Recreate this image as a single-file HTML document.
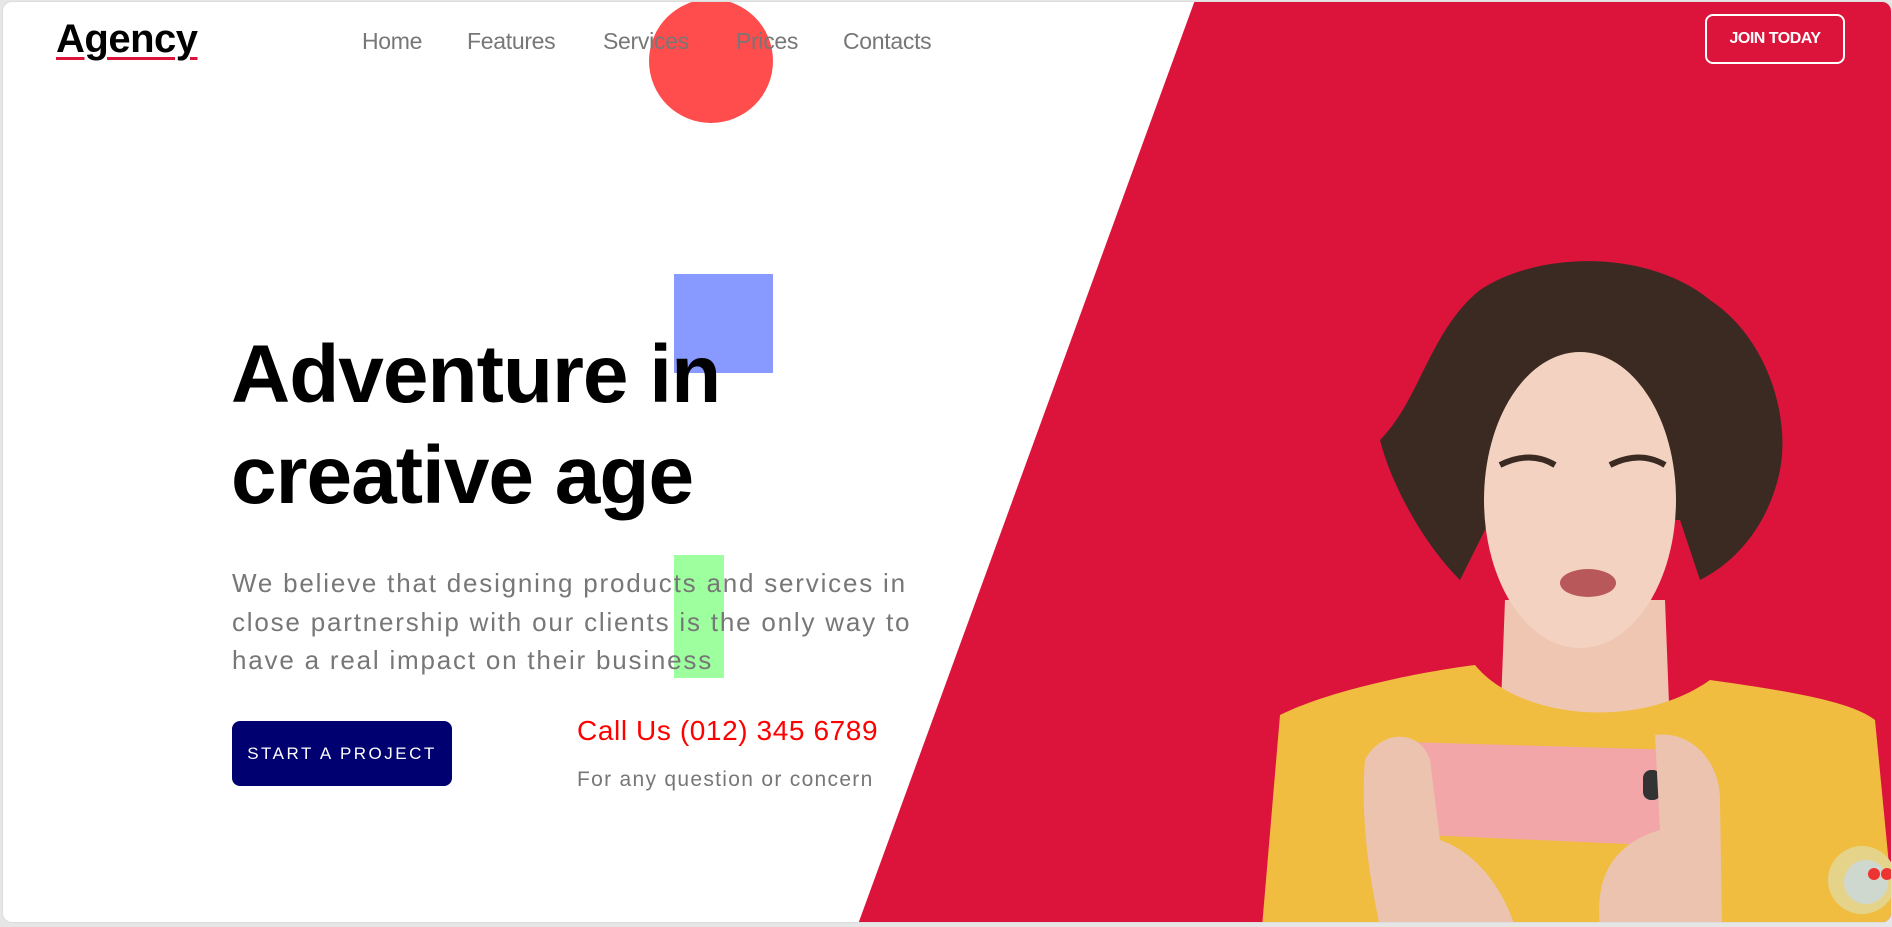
<!DOCTYPE html>
<html><head><meta charset="utf-8"><style>
html,body{margin:0;padding:0;width:1892px;height:927px;overflow:hidden;background:#e6e6e6;font-family:"Liberation Sans",sans-serif}
.card{position:absolute;left:2px;top:1px;width:1890px;height:922px;background:#fff;border-radius:10px;overflow:hidden;border:1px solid #ddd;box-sizing:border-box}
.abs{position:absolute;white-space:nowrap}
.nav{top:26px;font-size:23px;color:#777;letter-spacing:-0.3px}
</style></head><body>
<div class="card">
<svg class="abs" style="left:-3px;top:-2px" width="1895" height="927" viewBox="0 0 1895 927">
  <polygon points="1195,0 1895,0 1895,927 857,927" fill="#dc143c"/>
  <circle cx="711" cy="61" r="62" fill="#ff4c4c"/>
  <rect x="674" y="274" width="99" height="99" fill="#8899ff"/>
  <rect x="674" y="555" width="50" height="123" fill="#9dff9d"/>
  <!-- hair back -->
  <path d="M1380,440 C1420,400 1430,330 1480,290 C1540,250 1650,250 1710,300 C1770,340 1790,420 1780,470 C1770,520 1740,560 1700,580 L1680,520 L1490,520 L1460,580 C1420,540 1390,480 1380,440 Z" fill="#3b2a22"/>
  <!-- neck -->
  <path d="M1505,600 L1665,600 L1670,730 L1500,730 Z" fill="#efc6b2"/>
  <!-- face -->
  <ellipse cx="1580" cy="500" rx="96" ry="148" fill="#f3d2c1"/>
  <!-- hair fringe -->
  <path d="M1475,420 C1480,340 1540,300 1610,310 C1680,320 1700,370 1690,430 C1660,370 1620,350 1560,345 C1520,350 1495,380 1475,420 Z" fill="#3b2a22"/>
  <path d="M1500,465 q30,-15 55,0 M1610,465 q30,-15 55,0" stroke="#3a2a22" stroke-width="6" fill="none"/>
  <ellipse cx="1588" cy="583" rx="28" ry="14" fill="#b9585a"/>
  <!-- shirt -->
  <path d="M1280,715 C1330,690 1420,672 1475,665 C1520,720 1640,730 1710,680 C1780,690 1850,700 1875,720 L1895,927 L1262,927 Z" fill="#f0bd40"/>
  <!-- phone -->
  <path d="M1408,742 L1678,750 L1672,846 L1402,834 Z" fill="#f3a6a8"/>
  <rect x="1643" y="770" width="18" height="30" rx="8" fill="#333"/>
  <!-- hands -->
  <path d="M1365,760 C1380,730 1420,728 1430,760 L1440,840 C1470,850 1500,880 1515,927 L1380,927 C1370,880 1360,820 1365,760 Z" fill="#ecc3ae"/>
  <path d="M1655,735 C1690,730 1720,760 1720,800 L1722,927 L1600,927 C1595,880 1610,845 1660,830 Z" fill="#ecc3ae"/>
  <circle cx="1862" cy="880" r="34" fill="#e6d38a"/>
  <circle cx="1866" cy="882" r="22" fill="#cfd8cf"/>
  <circle cx="1874" cy="874" r="6" fill="#e33"/><circle cx="1887" cy="874" r="6" fill="#e33"/>
</svg>
<div class="abs" style="left:53px;top:15px;font-size:40px;font-weight:bold;color:#000;letter-spacing:-0.5px;text-decoration:underline;text-decoration-color:#dc143c;text-decoration-thickness:3px;text-underline-offset:5px">Agency</div>
<div class="abs nav" style="left:359px">Home</div>
<div class="abs nav" style="left:464px">Features</div>
<div class="abs nav" style="left:600px">Services</div>
<div class="abs nav" style="left:733px">Prices</div>
<div class="abs nav" style="left:840px">Contacts</div>
<div class="abs" style="left:1702px;top:12px;width:140px;height:50px;box-sizing:border-box;border:2px solid #fff;border-radius:8px;color:#fff;font-size:16px;font-weight:bold;letter-spacing:-0.5px;line-height:46px;text-align:center">JOIN TODAY</div>
<div class="abs" style="left:228px;top:322px;font-size:82px;font-weight:bold;color:#000;line-height:101px;letter-spacing:-1px;white-space:normal;width:700px">Adventure in<br>creative age</div>
<div class="abs" style="left:229px;top:562px;font-size:26px;color:#777;line-height:38.5px;letter-spacing:1.8px">We believe that designing products and services in<br>close partnership with our clients is the only way to<br>have a real impact on their business</div>
<div class="abs" style="left:229px;top:719px;width:220px;height:65px;background:#000070;border-radius:8px;color:#fff;font-size:17px;letter-spacing:2.5px;line-height:65px;text-align:center">START A PROJECT</div>
<div class="abs" style="left:574px;top:713px;font-size:28px;color:#f00;letter-spacing:0.6px">Call Us (012) 345 6789</div>
<div class="abs" style="left:574px;top:766px;font-size:21px;color:#777;letter-spacing:1.3px">For any question or concern</div>
</div>
</body></html>
